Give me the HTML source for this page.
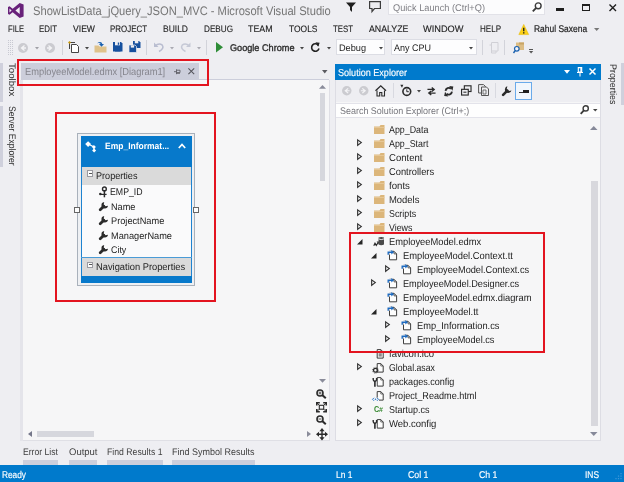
<!DOCTYPE html>
<html>
<head>
<meta charset="utf-8">
<title>ShowListData_jQuery_JSON_MVC - Microsoft Visual Studio</title>
<style>
html,body{margin:0;padding:0;}
body{width:624px;height:482px;overflow:hidden;background:#eeeef2;font-family:"Liberation Sans","DejaVu Sans",sans-serif;font-size:10px;color:#1e1e1e;position:relative;text-rendering:geometricPrecision;}
.a{position:absolute;white-space:nowrap;}
.t{position:absolute;white-space:nowrap;line-height:12px;transform-origin:0 0;}
.vt{position:absolute;white-space:nowrap;line-height:12px;transform-origin:0 0;}
svg{overflow:visible;}
#root{position:absolute;left:0;top:0;width:624px;height:482px;will-change:transform;}
</style>
</head>
<body>
<div id="root">
<svg class="a" style="left:7.700px;top:2.900px" width="15.600" height="15" viewBox="0 0 16 15" preserveAspectRatio="none"><path d="M12 0 L16 1.600 V13.400 L12 15 L4.800 9.200 L1.600 11.700 L0 10.900 V4.100 L1.600 3.300 L4.800 5.800 Z M12 4 L7.600 7.500 L12 11 Z M1.500 5.600 V9.400 L3.700 7.500 Z" fill="#68217a" fill-rule="evenodd"/></svg>
<div class="t" style="left:33px;top:5px;font-size:12.4px;color:#757575;transform:scaleX(0.8996);">ShowListData_jQuery_JSON_MVC - Microsoft Visual Studio</div>
<svg class="a" style="left:346px;top:2px" width="10" height="10" viewBox="0 0 10 10"><path d="M0 0.500 H10 L6 5 V10 L4 8 V5 Z" fill="#1e1e1e"/></svg>
<svg class="a" style="left:369px;top:1px" width="12" height="11.5" viewBox="0 0 12 11.5"><path d="M0.600 0.600 H11.400 V7.500 H5.500 L3 10.500 V7.500 H0.600 Z" fill="none" stroke="#3d3d3d" stroke-width="1.200"/></svg>
<div class="a" style="left:388px;top:0px;width:156.5px;height:15px;background:#fcfcfd;border-bottom:1px solid #e2e2e8;border-left:1px solid #e2e2e8;border-right:1px solid #e2e2e8;box-sizing:border-box;"></div>
<div class="t" style="left:393px;top:3px;font-size:9.8px;color:#808086;transform:scaleX(0.9411);">Quick Launch (Ctrl+Q)</div>
<svg class="a" style="left:532px;top:2px" width="10" height="10" viewBox="0 0 10 10"><circle cx="6.200" cy="3.800" r="2.900" fill="none" stroke="#3a3a3a" stroke-width="1.400"/><path d="M4.200 5.800 L0.800 9.400" stroke="#3a3a3a" stroke-width="1.800"/></svg>
<div class="a" style="left:556px;top:8.2px;width:7.5px;height:2.6px;background:#1e1e1e;"></div>
<div class="a" style="left:582px;top:4px;width:7.5px;height:7px;background:transparent;border:1px solid #1e1e1e;border-top-width:2.500px;box-sizing:border-box;"></div>
<svg class="a" style="left:608.5px;top:4px" width="7.5" height="7.5" viewBox="0 0 7.5 7.5"><path d="M0.500 0.500 L7 7 M7 0.500 L0.500 7" stroke="#1e1e1e" stroke-width="1.400"/></svg>
<div class="t" style="left:8px;top:23px;font-size:9.3px;color:#1e1e1e;transform:scaleX(0.8147);-webkit-text-stroke:0.12px #1e1e1e;">FILE</div>
<div class="t" style="left:39px;top:23px;font-size:9.3px;color:#1e1e1e;transform:scaleX(0.8497);-webkit-text-stroke:0.12px #1e1e1e;">EDIT</div>
<div class="t" style="left:73px;top:23px;font-size:9.3px;color:#1e1e1e;transform:scaleX(0.9256);-webkit-text-stroke:0.12px #1e1e1e;">VIEW</div>
<div class="t" style="left:110px;top:23px;font-size:9.3px;color:#1e1e1e;transform:scaleX(0.8525);-webkit-text-stroke:0.12px #1e1e1e;">PROJECT</div>
<div class="t" style="left:163px;top:23px;font-size:9.3px;color:#1e1e1e;transform:scaleX(0.9127);-webkit-text-stroke:0.12px #1e1e1e;">BUILD</div>
<div class="t" style="left:204px;top:23px;font-size:9.3px;color:#1e1e1e;transform:scaleX(0.8768);-webkit-text-stroke:0.12px #1e1e1e;">DEBUG</div>
<div class="t" style="left:248px;top:23px;font-size:9.3px;color:#1e1e1e;transform:scaleX(0.9484);-webkit-text-stroke:0.12px #1e1e1e;">TEAM</div>
<div class="t" style="left:288.5px;top:23px;font-size:9.3px;color:#1e1e1e;transform:scaleX(0.9090);-webkit-text-stroke:0.12px #1e1e1e;">TOOLS</div>
<div class="t" style="left:333px;top:23px;font-size:9.3px;color:#1e1e1e;transform:scaleX(0.8415);-webkit-text-stroke:0.12px #1e1e1e;">TEST</div>
<div class="t" style="left:368.5px;top:23px;font-size:9.3px;color:#1e1e1e;transform:scaleX(0.9474);-webkit-text-stroke:0.12px #1e1e1e;">ANALYZE</div>
<div class="t" style="left:423px;top:23px;font-size:9.3px;color:#1e1e1e;transform:scaleX(0.9925);-webkit-text-stroke:0.12px #1e1e1e;">WINDOW</div>
<div class="t" style="left:479.5px;top:23px;font-size:9.3px;color:#1e1e1e;transform:scaleX(0.8644);-webkit-text-stroke:0.12px #1e1e1e;">HELP</div>
<svg class="a" style="left:518px;top:24px" width="11.5" height="11" viewBox="0 0 10 10.5"><path d="M5 0.400 L9.700 10.100 H0.300 Z" fill="#fcd116" stroke="#e6b800" stroke-width="0.500"/><path d="M5 3.500 V7" stroke="#1e1e1e" stroke-width="1.300"/><rect x="4.350" y="7.800" width="1.300" height="1.300" fill="#1e1e1e"/></svg>
<div class="t" style="left:534.3px;top:24px;font-size:9.8px;color:#1e1e1e;transform:scaleX(0.8625);-webkit-text-stroke:0.2px #1e1e1e;">Rahul Saxena</div>
<svg class="a" style="left:593.8px;top:27.7px" width="5.4" height="3.1" viewBox="0 0 5.4 3.1"><path d="M0 0 H5.4 L2.7 3.1 Z" fill="#777"/></svg>
<div class="a" style="left:8px;top:39.500px;width:5px;height:15px;background:repeating-linear-gradient(0deg,#c8c9d2 0 1px,transparent 1px 2px);"></div>
<div class="a" style="left:9px;top:39.500px;width:1px;height:15px;background:#eeeef2;"></div><div class="a" style="left:11px;top:39.500px;width:1px;height:15px;background:#eeeef2;"></div>
<svg class="a" style="left:18px;top:42.5px" width="10" height="10" viewBox="0 0 10 10"><circle cx="5" cy="5" r="5" fill="#cbcbd0"/><path d="M6.500 2.500 L3.500 5 L6.500 7.500 M3.500 5 H8" fill="none" stroke="#f4f4f6" stroke-width="1.300"/></svg>
<svg class="a" style="left:35.0px;top:47.3px" width="4" height="2.5" viewBox="0 0 4 2.5"><path d="M0 0 H4 L2.0 2.5 Z" fill="#a0a0a6"/></svg>
<svg class="a" style="left:45px;top:42.5px" width="10" height="10" viewBox="0 0 10 10"><circle cx="5" cy="5" r="5" fill="#cbcbd0"/><path d="M3.500 2.500 L6.500 5 L3.500 7.500 M6.500 5 H2" fill="none" stroke="#f4f4f6" stroke-width="1.300"/></svg>
<div class="a" style="left:62px;top:40px;width:1px;height:15px;background:#d2d3da;"></div>
<svg class="a" style="left:67.5px;top:41px" width="12.5" height="12" viewBox="0 0 12.5 12"><path d="M3.500 3.500 H8.500 L10.500 5.500 V11.500 H3.500 Z" fill="#fff" stroke="#444" stroke-width="1"/><path d="M1.500 8 V1.500 H7" fill="none" stroke="#444" stroke-width="1"/><path d="M0 1.500 L1.500 0 L3 1.500 L1.500 3 Z" fill="#c89a10"/></svg>
<svg class="a" style="left:84.5px;top:47.3px" width="4" height="2.5" viewBox="0 0 4 2.5"><path d="M0 0 H4 L2.0 2.5 Z" fill="#444"/></svg>
<svg class="a" style="left:94px;top:41px" width="13.5" height="12" viewBox="0 0 13.5 12"><path d="M0.500 4.500 H4.500 L5.500 5.500 H12.500 V11.500 H0.500 Z" fill="#dfc28b"/><path d="M3 2.200 Q7.500 -0.500 8.300 3 L10 3 L7.500 5.800 L5 3 L6.700 3 Q6 1.500 3 2.200Z" fill="#1b62b0"/></svg>
<svg class="a" style="left:113px;top:42px" width="9.5" height="9.5" viewBox="0 0 9.5 9.5"><path d="M0 0 H8 L9.500 1.500 V9.500 H0 Z" fill="#16509e"/><rect x="2" y="0" width="5" height="3.300" fill="#eeeef2"/><rect x="4.800" y="0.500" width="1.400" height="2.300" fill="#16509e"/><rect x="2" y="5.500" width="5.500" height="4" fill="#16509e"/></svg>
<svg class="a" style="left:129px;top:41px" width="11.5" height="11.5" viewBox="0 0 11.5 11.5"><path d="M4 0 H10 L11.500 1.500 V7 H4 Z" fill="#16509e"/><rect x="5.800" y="0" width="3.500" height="2.300" fill="#eeeef2"/><path d="M0 4 H6 L7.500 5.500 V11.500 H0 Z" fill="#16509e" stroke="#eeeef2" stroke-width="0.700"/><rect x="1.800" y="4.300" width="3.300" height="2.300" fill="#eeeef2"/></svg>
<div class="a" style="left:146px;top:40px;width:1px;height:15px;background:#d2d3da;"></div>
<svg class="a" style="left:152.5px;top:42px" width="11.5" height="10" viewBox="0 0 11.5 10"><path d="M1 0.500 L1 5 L5.500 5 Z" fill="#b9bdd0"/><path d="M2 4 Q6 0.500 9.300 3.200 Q11.500 6.500 6 9.500" fill="none" stroke="#b9bdd0" stroke-width="1.500"/></svg>
<svg class="a" style="left:170.0px;top:47.3px" width="4" height="2.5" viewBox="0 0 4 2.5"><path d="M0 0 H4 L2.0 2.5 Z" fill="#aaaab2"/></svg>
<svg class="a" style="left:180px;top:42px" width="11.5" height="10" viewBox="0 0 11.5 10"><path d="M10.500 0.500 L10.500 5 L6 5 Z" fill="#c6c9d6"/><path d="M9.500 4 Q5.500 0.500 2.200 3.200 Q0 6.500 5.500 9.500" fill="none" stroke="#c6c9d6" stroke-width="1.500"/></svg>
<svg class="a" style="left:197.0px;top:47.3px" width="4" height="2.5" viewBox="0 0 4 2.5"><path d="M0 0 H4 L2.0 2.5 Z" fill="#aaaab2"/></svg>
<div class="a" style="left:206px;top:40px;width:1px;height:15px;background:#d2d3da;"></div>
<svg class="a" style="left:216px;top:42px" width="7" height="10.5" viewBox="0 0 7 10.5"><path d="M0 0 L7 5.250 L0 10.500 Z" fill="#2f8d38"/></svg>
<div class="t" style="left:229.5px;top:43px;font-size:9.6px;color:#2d2d2d;transform:scaleX(0.9519);-webkit-text-stroke:0.35px #2d2d2d;">Google Chrome</div>
<svg class="a" style="left:300.0px;top:47.3px" width="4" height="2.5" viewBox="0 0 4 2.5"><path d="M0 0 H4 L2.0 2.5 Z" fill="#444"/></svg>
<svg class="a" style="left:310.3px;top:42px" width="10.5" height="10.5" viewBox="0 0 12 12"><path d="M9.800 4 A4.300 4.300 0 1 0 10.300 7.500" fill="none" stroke="#222" stroke-width="1.800"/><path d="M6.300 0.300 L11 0.800 L9.300 5.300 Z" fill="#222"/></svg>
<svg class="a" style="left:327.0px;top:47.3px" width="4" height="2.5" viewBox="0 0 4 2.5"><path d="M0 0 H4 L2.0 2.5 Z" fill="#444"/></svg>
<div class="a" style="left:336px;top:38.8px;width:48.5px;height:16.7px;background:#fdfdfe;border:1px solid #dcdde4;box-sizing:border-box;"></div>
<div class="t" style="left:339px;top:43px;font-size:9.5px;color:#1e1e1e;transform:scaleX(0.9645);">Debug</div>
<svg class="a" style="left:379.0px;top:47.3px" width="4" height="2.5" viewBox="0 0 4 2.5"><path d="M0 0 H4 L2.0 2.5 Z" fill="#444"/></svg>
<div class="a" style="left:391px;top:38.8px;width:85.5px;height:16.7px;background:#fdfdfe;border:1px solid #dcdde4;box-sizing:border-box;"></div>
<div class="t" style="left:394px;top:43px;font-size:9.5px;color:#1e1e1e;transform:scaleX(0.9471);">Any CPU</div>
<svg class="a" style="left:469.0px;top:47.3px" width="4" height="2.5" viewBox="0 0 4 2.5"><path d="M0 0 H4 L2.0 2.5 Z" fill="#444"/></svg>
<div class="a" style="left:482px;top:40px;width:1px;height:15px;background:#d2d3da;"></div>
<svg class="a" style="left:489px;top:41.5px" width="9.5" height="11.5" viewBox="0 0 9.5 11.5"><path d="M2.500 0.500 H9 V9 H2.500 Z" fill="none" stroke="#d0d0d6" stroke-width="1"/><path d="M0.500 3 H2.500 V11 H7 V9" fill="none" stroke="#d0d0d6" stroke-width="1"/></svg>
<div class="a" style="left:504px;top:40px;width:1px;height:15px;background:#d2d3da;"></div>
<svg class="a" style="left:512.5px;top:41.5px" width="11" height="11.5" viewBox="0 0 11 11.5"><rect x="3" y="0.500" width="8" height="7.500" fill="#dcbd85"/><rect x="6" y="0.500" width="5" height="2" fill="#c9a566"/><circle cx="3.800" cy="6.800" r="2.300" fill="#f4f4f8" stroke="#1b62b0" stroke-width="1.200"/><path d="M2.300 8.500 L0.500 11" stroke="#1b62b0" stroke-width="1.400"/></svg>
<div class="a" style="left:529.3px;top:49.3px;width:4.2px;height:1px;background:#555;"></div>
<svg class="a" style="left:529.3px;top:51px" width="4.2" height="2.6" viewBox="0 0 4.2 2.6"><path d="M0 0 H4.2 L2.1 2.6 Z" fill="#555"/></svg>
<div class="vt" style="left:16.67px;top:63px;font-size:9.5px;color:#2d2d2d;transform:rotate(90deg) scaleX(1.0170);">Toolbox</div>
<div class="a" style="left:0px;top:63px;width:3px;height:38.5px;background:#cfd0dc;"></div>
<div class="vt" style="left:16.67px;top:106.3px;font-size:9.5px;color:#2d2d2d;transform:rotate(90deg) scaleX(0.9047);">Server Explorer</div>
<div class="a" style="left:0px;top:106px;width:3px;height:60.5px;background:#cfd0dc;"></div>
<div class="a" style="left:21px;top:63px;width:178px;height:16px;background:#cccedb;"></div>
<div class="a" style="left:21px;top:78.5px;width:308px;height:1.5px;background:#cccedb;"></div>
<div class="t" style="left:25.3px;top:67px;font-size:10.3px;color:#85858d;transform:scaleX(0.9038);">EmployeeModel.edmx [Diagram1]</div>
<svg class="a" style="left:174px;top:69px" width="6.5" height="5.5" viewBox="0 0 6.5 5.5"><path d="M0 2.700 H2.500 M2.500 0.300 V5.200 M2.500 1.200 H6 V3.600 H2.500 M2.500 4.300 H6" fill="none" stroke="#5f5f66" stroke-width="0.900"/></svg>
<svg class="a" style="left:188.2px;top:68.2px" width="6.6" height="6.6" viewBox="0 0 6.6 6.6"><path d="M0.400 0.400 L6.200 6.200 M6.200 0.400 L0.400 6.200" stroke="#55555c" stroke-width="1.050"/></svg>
<svg class="a" style="left:322px;top:70px" width="5.5" height="3.5" viewBox="0 0 5.5 3.5"><path d="M0 0 H5.5 L2.75 3.5 Z" fill="#5a5a60"/></svg>
<div class="a" style="left:19.5px;top:80px;width:3.5px;height:361px;background:#e4e4ea;"></div>
<div class="a" style="left:22.5px;top:80px;width:307px;height:361px;background:#f6f6f7;border:1px solid #dfdfe5;border-top:none;border-left:none;box-sizing:border-box;"></div>
<svg class="a" style="left:319px;top:84.7px" width="7" height="3.8" viewBox="0 0 7 3.8"><path d="M0 3.8 H7 L3.5 0 Z" fill="#8a8c9a"/></svg>
<div class="a" style="left:319.5px;top:93px;width:5.5px;height:87.5px;background:#d6d7dd;"></div>
<svg class="a" style="left:319px;top:379px" width="7" height="3.8" viewBox="0 0 7 3.8"><path d="M0 0 H7 L3.5 3.8 Z" fill="#8a8c9a"/></svg>
<svg class="a" style="left:28px;top:431px" width="4" height="6" viewBox="0 0 4 6"><path d="M4 0 V6 L0 3 Z" fill="#75778a"/></svg>
<div class="a" style="left:37px;top:431px;width:57px;height:6px;background:#d6d7dd;"></div>
<svg class="a" style="left:307px;top:431px" width="4" height="6" viewBox="0 0 4 6"><path d="M0 0 V6 L4 3 Z" fill="#8a8c9a"/></svg>
<svg class="a" style="left:316px;top:389px" width="10.5" height="10" viewBox="0 0 10.5 10"><circle cx="4" cy="4" r="3" fill="none" stroke="#2b2b2b" stroke-width="1.600"/><path d="M6.200 6 L9.800 9.300" stroke="#2b2b2b" stroke-width="2"/><path d="M2.500 4 H5.500 M4 2.500 V5.500" stroke="#2b2b2b" stroke-width="0.800"/></svg>
<svg class="a" style="left:316px;top:402px" width="11" height="10.5" viewBox="0 0 11 10.5"><path d="M0.800 3.500 V0.800 H3.800 M7.200 0.800 H10.200 V3.500 M0.800 7 V9.700 H3.800 M7.200 9.700 H10.200 V7" stroke="#2b2b2b" stroke-width="1.600" fill="none"/><rect x="3.300" y="3.300" width="4.400" height="3.900" fill="none" stroke="#2b2b2b" stroke-width="1.100"/><path d="M1 1 L3.500 3.500 M10 1 L7.500 3.500 M1 9.500 L3.500 7 M10 9.500 L7.500 7" stroke="#2b2b2b" stroke-width="0.900"/></svg>
<svg class="a" style="left:316px;top:415px" width="10.5" height="10" viewBox="0 0 10.5 10"><circle cx="4" cy="4" r="3" fill="none" stroke="#2b2b2b" stroke-width="1.600"/><path d="M6.200 6 L9.800 9.300" stroke="#2b2b2b" stroke-width="2"/><path d="M2.500 4 H5.500" stroke="#2b2b2b" stroke-width="0.800"/></svg>
<svg class="a" style="left:315.5px;top:427.5px" width="12" height="12.5" viewBox="0 0 12 12.5"><path d="M6 1.500 V11 M1.500 6.250 H10.500" stroke="#2b2b2b" stroke-width="1.400"/><path d="M6 0 L3.400 3.200 H8.600 Z M6 12.500 L3.400 9.300 H8.600 Z M0 6.250 L3 3.700 V8.800 Z M12 6.250 L9 3.700 V8.800 Z" fill="#2b2b2b"/></svg>
<div class="a" style="left:77px;top:132.5px;width:117.8px;height:153.5px;background:#eef0f3;border:1px solid #a9b1bb;box-sizing:border-box;"></div>
<div class="a" style="left:81px;top:136px;width:111.3px;height:146.6px;background:#fafafb;border-left:1.500px solid #1f83d0;border-right:1.500px solid #1f83d0;box-sizing:border-box;"></div>
<div class="a" style="left:81px;top:136px;width:111.3px;height:30.5px;background:#0779cb;"></div>
<div class="a" style="left:82px;top:167px;width:109.3px;height:17.8px;background:#dadada;"></div>
<div class="a" style="left:81px;top:257px;width:111.3px;height:1px;background:#4a9bd6;"></div>
<div class="a" style="left:82px;top:258px;width:109.3px;height:17.5px;background:#dadada;"></div>
<div class="a" style="left:81px;top:276px;width:111.3px;height:6.6px;background:#0779cb;"></div>
<svg class="a" style="left:84.5px;top:140.5px" width="12" height="11.5" viewBox="0 0 12 11.5"><path d="M3.100 0.200 L6 3.100 L3.100 6 L0.200 3.100 Z" fill="#fff"/><path d="M8.900 3.900 L10.900 5.900 L8.900 7.900 L6.900 5.900 Z" fill="#fff"/><path d="M9.100 7.400 L11.100 9.400 L9.100 11.400 L7.100 9.400 Z" fill="#fff"/><path d="M3.100 3.100 L8.900 5.900 L9.100 9.400" stroke="#fff" stroke-width="1.100" fill="none"/></svg>
<div class="t" style="left:104.7px;top:140px;font-size:9.2px;color:#fff;font-weight:bold;transform:scaleX(0.9249);">Emp_Informat...</div>
<svg class="a" style="left:177.5px;top:142.8px" width="8" height="5.5" viewBox="0 0 8 5.5"><path d="M0.800 5 L4 1.500 L7.200 5" fill="none" stroke="#fff" stroke-width="1.700"/></svg>
<div class="a" style="left:86.8px;top:170.2px;width:6.5px;height:6.5px;background:#fdfdfd;border:1px solid #9a9aa0;box-sizing:border-box;"></div>
<div class="a" style="left:88.6px;top:173.0px;width:3px;height:1px;background:#555;"></div>
<div class="t" style="left:96.2px;top:171px;font-size:9.8px;color:#222;transform:scaleX(0.9292);">Properties</div>
<svg class="a" style="left:99px;top:186px" width="9" height="12" viewBox="0 0 9 12"><circle cx="5.400" cy="2.900" r="1.900" fill="none" stroke="#2b2b2b" stroke-width="1.400"/><path d="M5.400 4.800 V11.300" stroke="#2b2b2b" stroke-width="1.500"/><path d="M1 8.400 H7.600" stroke="#2b2b2b" stroke-width="1.200"/><circle cx="1.300" cy="7.900" r="1.250" fill="#2b2b2b"/></svg>
<div class="t" style="left:110.4px;top:187px;font-size:9.8px;color:#222;transform:scaleX(0.8935);">EMP_ID</div>
<svg class="a" style="left:99px;top:202.0px" width="8.5" height="9" viewBox="0 0 8.5 9"><path d="M1.200 7.800 L4.800 4.200" stroke="#2b2b2b" stroke-width="2.800" stroke-linecap="round"/><path d="M5.200 0 A3.300 3.300 0 1 0 9 3.800 L6.500 4.300 L4.700 2.500 Z" fill="#2b2b2b"/></svg>
<div class="t" style="left:111px;top:202px;font-size:9.6px;color:#222;transform:scaleX(0.9529);">Name</div>
<svg class="a" style="left:99px;top:216.0px" width="8.5" height="9" viewBox="0 0 8.5 9"><path d="M1.200 7.800 L4.800 4.200" stroke="#2b2b2b" stroke-width="2.800" stroke-linecap="round"/><path d="M5.200 0 A3.300 3.300 0 1 0 9 3.800 L6.500 4.300 L4.700 2.500 Z" fill="#2b2b2b"/></svg>
<div class="t" style="left:111px;top:216px;font-size:9.6px;color:#222;transform:scaleX(0.9606);">ProjectName</div>
<svg class="a" style="left:99px;top:231.0px" width="8.5" height="9" viewBox="0 0 8.5 9"><path d="M1.200 7.800 L4.800 4.200" stroke="#2b2b2b" stroke-width="2.800" stroke-linecap="round"/><path d="M5.200 0 A3.300 3.300 0 1 0 9 3.800 L6.500 4.300 L4.700 2.500 Z" fill="#2b2b2b"/></svg>
<div class="t" style="left:111px;top:231px;font-size:9.6px;color:#222;transform:scaleX(0.9608);">ManagerName</div>
<svg class="a" style="left:99px;top:245.0px" width="8.5" height="9" viewBox="0 0 8.5 9"><path d="M1.200 7.800 L4.800 4.200" stroke="#2b2b2b" stroke-width="2.800" stroke-linecap="round"/><path d="M5.200 0 A3.300 3.300 0 1 0 9 3.800 L6.500 4.300 L4.700 2.500 Z" fill="#2b2b2b"/></svg>
<div class="t" style="left:111px;top:245px;font-size:9.6px;color:#222;transform:scaleX(0.9254);">City</div>
<div class="a" style="left:86.8px;top:261.6px;width:6.5px;height:6.5px;background:#fdfdfd;border:1px solid #9a9aa0;box-sizing:border-box;"></div>
<div class="a" style="left:88.6px;top:264.40000000000003px;width:3px;height:1px;background:#555;"></div>
<div class="t" style="left:96.3px;top:262px;font-size:9.8px;color:#222;transform:scaleX(0.9521);">Navigation Properties</div>
<div class="a" style="left:74px;top:207px;width:6px;height:6px;background:#fdfdfd;border:1px solid #666;box-sizing:border-box;"></div>
<div class="a" style="left:192.5px;top:207px;width:6px;height:6px;background:#fdfdfd;border:1px solid #666;box-sizing:border-box;"></div>
<div class="t" style="left:23px;top:447px;font-size:9.6px;color:#3f3f3f;transform:scaleX(0.8989);">Error List</div>
<div class="a" style="left:23px;top:460.4px;width:35px;height:4.6px;background:#cdcfdc;"></div>
<div class="t" style="left:68.5px;top:447px;font-size:9.6px;color:#3f3f3f;transform:scaleX(0.9890);">Output</div>
<div class="a" style="left:68.5px;top:460.4px;width:28.5px;height:4.6px;background:#cdcfdc;"></div>
<div class="t" style="left:107px;top:447px;font-size:9.6px;color:#3f3f3f;transform:scaleX(0.9046);">Find Results 1</div>
<div class="a" style="left:107px;top:460.4px;width:55.5px;height:4.6px;background:#cdcfdc;"></div>
<div class="t" style="left:172px;top:447px;font-size:9.6px;color:#3f3f3f;transform:scaleX(0.9372);">Find Symbol Results</div>
<div class="a" style="left:172px;top:460.4px;width:82.5px;height:4.6px;background:#cdcfdc;"></div>
<div class="a" style="left:0px;top:464.9px;width:624px;height:17.1px;background:#007acc;"></div>
<div class="t" style="left:2px;top:470px;font-size:9.8px;color:#fff;transform:scaleX(0.8473);-webkit-text-stroke:0.15px #fff;">Ready</div>
<div class="t" style="left:335.8px;top:470px;font-size:9.8px;color:#fff;transform:scaleX(0.8599);-webkit-text-stroke:0.15px #fff;">Ln 1</div>
<div class="t" style="left:407.5px;top:470px;font-size:9.8px;color:#fff;transform:scaleX(0.8961);-webkit-text-stroke:0.15px #fff;">Col 1</div>
<div class="t" style="left:479px;top:470px;font-size:9.8px;color:#fff;transform:scaleX(0.8937);-webkit-text-stroke:0.15px #fff;">Ch 1</div>
<div class="t" style="left:585px;top:470px;font-size:9.8px;color:#fff;transform:scaleX(0.8570);-webkit-text-stroke:0.15px #fff;">INS</div>
<svg class="a" style="left:614px;top:472.5px" width="8" height="8" viewBox="0 0 8 8"><path d="M7 0 V1.200 M7 2.500 V3.700 M7 5 V6.200 M4.500 2.500 V3.700 M4.500 5 V6.200 M2 5 V6.200" stroke="#3f97d8" stroke-width="1.200"/></svg>
<div class="a" style="left:335px;top:63.8px;width:266px;height:377.2px;background:#f6f6f7;border:1px solid #dddde4;box-sizing:border-box;"></div>
<div class="a" style="left:335px;top:63.8px;width:266px;height:16px;background:#007acc;"></div>
<div class="t" style="left:338px;top:68px;font-size:10px;color:#fff;transform:scaleX(0.9061);-webkit-text-stroke:0.15px #fff;">Solution Explorer</div>
<svg class="a" style="left:564px;top:70px" width="6" height="3.8" viewBox="0 0 6 3.8"><path d="M0 0 H6 L3.0 3.8 Z" fill="#fff"/></svg>
<svg class="a" style="left:576.5px;top:67px" width="6" height="9.5" viewBox="0 0 6 9.5"><path d="M1.300 0.600 H4.700 V5 H1.300 Z M0 5.500 H6 M3 5.500 V9.500" fill="none" stroke="#fff" stroke-width="1.100"/><path d="M4 0.600 V5" stroke="#fff" stroke-width="1.300"/></svg>
<svg class="a" style="left:588.5px;top:68px" width="7" height="7" viewBox="0 0 7 7"><path d="M0.500 0.500 L6.500 6.500 M6.500 0.500 L0.500 6.500" stroke="#fff" stroke-width="1.500"/></svg>
<div class="a" style="left:336px;top:79.8px;width:264px;height:22.7px;background:#eeeef2;"></div>
<svg class="a" style="left:342.4px;top:86px" width="9.5" height="9.5" viewBox="0 0 10 10"><circle cx="5" cy="5" r="5" fill="#cbcbd0"/><path d="M6.500 2.500 L3.500 5 L6.500 7.500 M3.500 5 H8" fill="none" stroke="#f4f4f6" stroke-width="1.300"/></svg>
<svg class="a" style="left:359.2px;top:86px" width="9.5" height="9.5" viewBox="0 0 10 10"><circle cx="5" cy="5" r="5" fill="#cbcbd0"/><path d="M3.500 2.500 L6.500 5 L3.500 7.500 M6.500 5 H2" fill="none" stroke="#f4f4f6" stroke-width="1.300"/></svg>
<svg class="a" style="left:375px;top:84.5px" width="11.5" height="11.5" viewBox="0 0 11.5 11.5"><path d="M0.500 5.800 L5.750 0.800 L11 5.800" fill="none" stroke="#2b2b2b" stroke-width="1.300"/><path d="M2 5.500 V11 H4.700 V7.500 H6.800 V11 H9.500 V5.500" fill="none" stroke="#2b2b2b" stroke-width="1.100"/></svg>
<div class="a" style="left:393px;top:83px;width:1px;height:15px;background:#d8d9e0;"></div>
<svg class="a" style="left:399.5px;top:83.5px" width="12" height="12.5" viewBox="0 0 12 12.5"><circle cx="6.800" cy="7.500" r="3.900" fill="none" stroke="#2b2b2b" stroke-width="1.600"/><path d="M6.800 5.300 V7.700 H8.800" fill="none" stroke="#2b2b2b" stroke-width="1"/><path d="M0.300 0.800 L3.300 0.800 L2 3.800 Z" fill="#2b2b2b"/></svg>
<svg class="a" style="left:416.5px;top:89.8px" width="4" height="2.5" viewBox="0 0 4 2.5"><path d="M0 0 H4 L2.0 2.5 Z" fill="#444"/></svg>
<svg class="a" style="left:427.3px;top:86.8px" width="9" height="8.5" viewBox="0 0 10 10.5"><path d="M0 3 H7.500 M5.300 0.500 L8.300 3 L5.300 5.500 M10 7.500 H2.500 M4.700 5 L1.700 7.500 L4.700 10" fill="none" stroke="#2b2b2b" stroke-width="1.700"/></svg>
<svg class="a" style="left:444px;top:86px" width="9.5" height="10.5" viewBox="0 0 11 12"><path d="M1.800 5.500 A3.800 3.800 0 0 1 8 3 M9.200 6.500 A3.800 3.800 0 0 1 3 9" fill="none" stroke="#2b2b2b" stroke-width="2.200"/><path d="M6 0 L10.800 0.500 L9.800 5.500 Z M5 12 L0.200 11.500 L1.200 6.500 Z" fill="#2b2b2b"/></svg>
<svg class="a" style="left:461px;top:84.5px" width="10.5" height="11.5" viewBox="0 0 11 12"><rect x="3.500" y="0.800" width="7" height="6" fill="#eeeef2" stroke="#2b2b2b" stroke-width="1.200"/><rect x="0.600" y="4.500" width="7" height="6" fill="#eeeef2" stroke="#2b2b2b" stroke-width="1.200"/><path d="M2.500 7.500 H5.700" stroke="#2b2b2b" stroke-width="1.100"/></svg>
<svg class="a" style="left:477.5px;top:84px" width="12" height="12" viewBox="0 0 12 12"><path d="M0.600 0.600 H5.500 L7.500 2.500 V9 H0.600 Z" fill="#eeeef2" stroke="#555" stroke-width="1"/><path d="M3.500 3 H8.500 L10.500 5 V11.500 H3.500 Z" fill="#eeeef2" stroke="#555" stroke-width="1"/><path d="M5 6 H8 V10 H5 Z" fill="none" stroke="#555" stroke-width="0.800"/></svg>
<div class="a" style="left:495px;top:83px;width:1px;height:15px;background:#d8d9e0;"></div>
<svg class="a" style="left:501.5px;top:85.5px" width="10" height="10" viewBox="0 0 9 9"><path d="M1 8 L4.800 4.200" stroke="#2b2b2b" stroke-width="2.400" stroke-linecap="round"/><path d="M4.800 0.300 A3 3 0 1 0 8.500 4 L6.300 4.600 L4.300 2.600 Z" fill="#2b2b2b"/></svg>
<div class="a" style="left:515px;top:82px;width:17px;height:18px;background:#f1f6fc;border:1px solid #6aaaea;box-sizing:border-box;"></div>
<div class="a" style="left:518.5px;top:91.5px;width:5px;height:1px;background:#333;"></div>
<div class="a" style="left:523px;top:89.5px;width:6px;height:3px;background:#1e1e1e;"></div>
<div class="a" style="left:336px;top:102.5px;width:264px;height:15.5px;background:#fefefe;border-top:1px solid #e3e3ea;border-bottom:1px solid #e3e3ea;box-sizing:border-box;"></div>
<div class="t" style="left:339.5px;top:106px;font-size:9.6px;color:#76767c;transform:scaleX(0.9332);">Search Solution Explorer (Ctrl+;)</div>
<svg class="a" style="left:580px;top:105px" width="9" height="9.5" viewBox="0 0 9 9.5"><circle cx="5.700" cy="3.400" r="2.600" fill="none" stroke="#3a3a3a" stroke-width="1.400"/><path d="M3.900 5.300 L0.700 8.900" stroke="#3a3a3a" stroke-width="1.800"/></svg>
<svg class="a" style="left:593px;top:109px" width="4.5" height="2.5" viewBox="0 0 4.5 2.5"><path d="M0 0 H4.5 L2.25 2.5 Z" fill="#444"/></svg>
<svg class="a" style="left:590px;top:126px" width="7.5" height="4" viewBox="0 0 7.5 4"><path d="M0 4 H7.5 L3.75 0 Z" fill="#868999"/></svg>
<div class="a" style="left:591px;top:180.5px;width:6.8px;height:245.5px;background:#d8d8dd;"></div>
<svg class="a" style="left:590px;top:432px" width="7.5" height="4" viewBox="0 0 7.5 4"><path d="M0 0 H7.5 L3.75 4 Z" fill="#868999"/></svg>
<svg class="a" style="left:373.5px;top:124.5px" width="10.5" height="9" viewBox="0 0 10.5 9"><path d="M0 1.500 H5.500 L6.500 0 H10.500 V9 H0 Z" fill="#dcb67a"/><path d="M0 2.500 H10.500" stroke="#e8cc9c" stroke-width="0.800"/></svg>
<div class="t" style="left:388.6px;top:125px;font-size:10px;color:#222;transform:scaleX(0.8859);">App_Data</div>
<svg class="a" style="left:356.9px;top:139.1px" width="5.2" height="7.2" viewBox="0 0 5.2 7.2"><path d="M0.650 0.900 L4.300 3.600 L0.650 6.300 Z" fill="#f6f6f7" stroke="#333" stroke-width="1.150"/></svg>
<svg class="a" style="left:373.5px;top:138.5px" width="10.5" height="9" viewBox="0 0 10.5 9"><path d="M0 1.500 H5.500 L6.500 0 H10.500 V9 H0 Z" fill="#dcb67a"/><path d="M0 2.500 H10.500" stroke="#e8cc9c" stroke-width="0.800"/></svg>
<div class="t" style="left:388.6px;top:139px;font-size:10px;color:#222;transform:scaleX(0.8860);">App_Start</div>
<svg class="a" style="left:356.9px;top:153.1px" width="5.2" height="7.2" viewBox="0 0 5.2 7.2"><path d="M0.650 0.900 L4.300 3.600 L0.650 6.300 Z" fill="#f6f6f7" stroke="#333" stroke-width="1.150"/></svg>
<svg class="a" style="left:373.5px;top:152.5px" width="10.5" height="9" viewBox="0 0 10.5 9"><path d="M0 1.500 H5.500 L6.500 0 H10.500 V9 H0 Z" fill="#dcb67a"/><path d="M0 2.500 H10.500" stroke="#e8cc9c" stroke-width="0.800"/></svg>
<div class="t" style="left:388.6px;top:153px;font-size:10px;color:#222;transform:scaleX(0.9537);">Content</div>
<svg class="a" style="left:356.9px;top:167.1px" width="5.2" height="7.2" viewBox="0 0 5.2 7.2"><path d="M0.650 0.900 L4.300 3.600 L0.650 6.300 Z" fill="#f6f6f7" stroke="#333" stroke-width="1.150"/></svg>
<svg class="a" style="left:373.5px;top:166.5px" width="10.5" height="9" viewBox="0 0 10.5 9"><path d="M0 1.500 H5.500 L6.500 0 H10.500 V9 H0 Z" fill="#dcb67a"/><path d="M0 2.500 H10.500" stroke="#e8cc9c" stroke-width="0.800"/></svg>
<div class="t" style="left:388.6px;top:167px;font-size:10px;color:#222;transform:scaleX(0.9328);">Controllers</div>
<svg class="a" style="left:356.9px;top:181.1px" width="5.2" height="7.2" viewBox="0 0 5.2 7.2"><path d="M0.650 0.900 L4.300 3.600 L0.650 6.300 Z" fill="#f6f6f7" stroke="#333" stroke-width="1.150"/></svg>
<svg class="a" style="left:373.5px;top:180.5px" width="10.5" height="9" viewBox="0 0 10.5 9"><path d="M0 1.500 H5.500 L6.500 0 H10.500 V9 H0 Z" fill="#dcb67a"/><path d="M0 2.500 H10.500" stroke="#e8cc9c" stroke-width="0.800"/></svg>
<div class="t" style="left:388.6px;top:181px;font-size:10px;color:#222;transform:scaleX(0.9641);">fonts</div>
<svg class="a" style="left:356.9px;top:195.4px" width="5.2" height="7.2" viewBox="0 0 5.2 7.2"><path d="M0.650 0.900 L4.300 3.600 L0.650 6.300 Z" fill="#f6f6f7" stroke="#333" stroke-width="1.150"/></svg>
<svg class="a" style="left:373.5px;top:194.8px" width="10.5" height="9" viewBox="0 0 10.5 9"><path d="M0 1.500 H5.500 L6.500 0 H10.500 V9 H0 Z" fill="#dcb67a"/><path d="M0 2.500 H10.500" stroke="#e8cc9c" stroke-width="0.800"/></svg>
<div class="t" style="left:388.6px;top:195px;font-size:10px;color:#222;transform:scaleX(0.9431);">Models</div>
<svg class="a" style="left:356.9px;top:209.4px" width="5.2" height="7.2" viewBox="0 0 5.2 7.2"><path d="M0.650 0.900 L4.300 3.600 L0.650 6.300 Z" fill="#f6f6f7" stroke="#333" stroke-width="1.150"/></svg>
<svg class="a" style="left:373.5px;top:208.8px" width="10.5" height="9" viewBox="0 0 10.5 9"><path d="M0 1.500 H5.500 L6.500 0 H10.500 V9 H0 Z" fill="#dcb67a"/><path d="M0 2.500 H10.500" stroke="#e8cc9c" stroke-width="0.800"/></svg>
<div class="t" style="left:388.6px;top:209px;font-size:10px;color:#222;transform:scaleX(0.8868);">Scripts</div>
<svg class="a" style="left:356.9px;top:223.4px" width="5.2" height="7.2" viewBox="0 0 5.2 7.2"><path d="M0.650 0.900 L4.300 3.600 L0.650 6.300 Z" fill="#f6f6f7" stroke="#333" stroke-width="1.150"/></svg>
<svg class="a" style="left:373.5px;top:222.8px" width="10.5" height="9" viewBox="0 0 10.5 9"><path d="M0 1.500 H5.500 L6.500 0 H10.500 V9 H0 Z" fill="#dcb67a"/><path d="M0 2.500 H10.500" stroke="#e8cc9c" stroke-width="0.800"/></svg>
<div class="t" style="left:388.6px;top:223px;font-size:10px;color:#222;transform:scaleX(0.8832);">Views</div>
<svg class="a" style="left:357.0px;top:238.8px" width="5.5" height="5.5" viewBox="0 0 5.5 5.5"><path d="M5.500 0 V5.500 H0 Z" fill="#262626"/></svg>
<svg class="a" style="left:373px;top:235.8px" width="12" height="11.5" viewBox="0 0 12 11.5"><path d="M5.500 1.600 Q8.200 0.200 11 1.600 V8.400 Q8.200 9.900 5.500 8.400 Z" fill="#484848"/><path d="M5.500 2.900 Q8.200 4.300 11 2.900" stroke="#f5f5f7" stroke-width="0.900" fill="none"/><path d="M0.800 9.700 L2 7.300 L3.300 9.300 L5.200 6.500" stroke="#2b2b2b" stroke-width="1.200" fill="none"/><path d="M3.600 5.600 L5.800 5.600 L5.600 7.900 Z" fill="#2b2b2b"/></svg>
<div class="t" style="left:388.6px;top:237px;font-size:10px;color:#222;transform:scaleX(0.9320);">EmployeeModel.edmx</div>
<svg class="a" style="left:371.0px;top:252.8px" width="5.5" height="5.5" viewBox="0 0 5.5 5.5"><path d="M5.500 0 V5.500 H0 Z" fill="#262626"/></svg>
<svg class="a" style="left:386.5px;top:249.8px" width="11" height="11" viewBox="0 0 11 11"><path d="M2.500 1.300 H7 L9.600 3.900 V9.800 H2.500 Z" fill="#fdfdfd" stroke="#3f3f3f" stroke-width="1"/><path d="M7 1.300 V3.900 H9.600" fill="none" stroke="#3f3f3f" stroke-width="0.800"/><path d="M1.200 5 V2.300 H5" fill="none" stroke="#f6f6f7" stroke-width="2.600"/><path d="M1.200 4.800 V2.300 H5" fill="none" stroke="#1e6bc0" stroke-width="1.400"/><path d="M4.300 0.100 L7 2.300 L4.300 4.500 Z" fill="#1e6bc0"/></svg>
<div class="t" style="left:402.6px;top:251px;font-size:10px;color:#222;transform:scaleX(0.9371);">EmployeeModel.Context.tt</div>
<svg class="a" style="left:384.9px;top:265.40000000000003px" width="5.2" height="7.2" viewBox="0 0 5.2 7.2"><path d="M0.650 0.900 L4.300 3.600 L0.650 6.300 Z" fill="#f6f6f7" stroke="#333" stroke-width="1.150"/></svg>
<svg class="a" style="left:400.5px;top:263.8px" width="11" height="11" viewBox="0 0 11 11"><path d="M2.500 1.300 H7 L9.600 3.900 V9.800 H2.500 Z" fill="#fdfdfd" stroke="#3f3f3f" stroke-width="1"/><path d="M7 1.300 V3.900 H9.600" fill="none" stroke="#3f3f3f" stroke-width="0.800"/><path d="M1.200 5 V2.300 H5" fill="none" stroke="#f6f6f7" stroke-width="2.600"/><path d="M1.200 4.800 V2.300 H5" fill="none" stroke="#1e6bc0" stroke-width="1.400"/><path d="M4.300 0.100 L7 2.300 L4.300 4.500 Z" fill="#1e6bc0"/></svg>
<div class="t" style="left:416.6px;top:265px;font-size:10px;color:#222;transform:scaleX(0.9210);">EmployeeModel.Context.cs</div>
<svg class="a" style="left:370.9px;top:279.40000000000003px" width="5.2" height="7.2" viewBox="0 0 5.2 7.2"><path d="M0.650 0.900 L4.300 3.600 L0.650 6.300 Z" fill="#f6f6f7" stroke="#333" stroke-width="1.150"/></svg>
<svg class="a" style="left:386.5px;top:277.8px" width="11" height="11" viewBox="0 0 11 11"><path d="M2.500 1.300 H7 L9.600 3.900 V9.800 H2.500 Z" fill="#fdfdfd" stroke="#3f3f3f" stroke-width="1"/><path d="M7 1.300 V3.900 H9.600" fill="none" stroke="#3f3f3f" stroke-width="0.800"/><path d="M1.200 5 V2.300 H5" fill="none" stroke="#f6f6f7" stroke-width="2.600"/><path d="M1.200 4.800 V2.300 H5" fill="none" stroke="#1e6bc0" stroke-width="1.400"/><path d="M4.300 0.100 L7 2.300 L4.300 4.500 Z" fill="#1e6bc0"/></svg>
<div class="t" style="left:402.6px;top:279px;font-size:10px;color:#222;transform:scaleX(0.9162);">EmployeeModel.Designer.cs</div>
<svg class="a" style="left:386.5px;top:291.7px" width="11" height="11" viewBox="0 0 11 11"><path d="M2.500 1.300 H7 L9.600 3.900 V9.800 H2.500 Z" fill="#fdfdfd" stroke="#3f3f3f" stroke-width="1"/><path d="M7 1.300 V3.900 H9.600" fill="none" stroke="#3f3f3f" stroke-width="0.800"/><path d="M1.200 5 V2.300 H5" fill="none" stroke="#f6f6f7" stroke-width="2.600"/><path d="M1.200 4.800 V2.300 H5" fill="none" stroke="#1e6bc0" stroke-width="1.400"/><path d="M4.300 0.100 L7 2.300 L4.300 4.500 Z" fill="#1e6bc0"/></svg>
<div class="t" style="left:402.6px;top:293px;font-size:10px;color:#222;transform:scaleX(0.9316);">EmployeeModel.edmx.diagram</div>
<svg class="a" style="left:371.0px;top:308.7px" width="5.5" height="5.5" viewBox="0 0 5.5 5.5"><path d="M5.500 0 V5.500 H0 Z" fill="#262626"/></svg>
<svg class="a" style="left:386.5px;top:305.7px" width="11" height="11" viewBox="0 0 11 11"><path d="M2.500 1.300 H7 L9.600 3.900 V9.800 H2.500 Z" fill="#fdfdfd" stroke="#3f3f3f" stroke-width="1"/><path d="M7 1.300 V3.900 H9.600" fill="none" stroke="#3f3f3f" stroke-width="0.800"/><path d="M1.200 5 V2.300 H5" fill="none" stroke="#f6f6f7" stroke-width="2.600"/><path d="M1.200 4.800 V2.300 H5" fill="none" stroke="#1e6bc0" stroke-width="1.400"/><path d="M4.300 0.100 L7 2.300 L4.300 4.500 Z" fill="#1e6bc0"/></svg>
<div class="t" style="left:402.6px;top:307px;font-size:10px;color:#222;transform:scaleX(0.9421);">EmployeeModel.tt</div>
<svg class="a" style="left:384.9px;top:321.3px" width="5.2" height="7.2" viewBox="0 0 5.2 7.2"><path d="M0.650 0.900 L4.300 3.600 L0.650 6.300 Z" fill="#f6f6f7" stroke="#333" stroke-width="1.150"/></svg>
<svg class="a" style="left:400.5px;top:319.7px" width="11" height="11" viewBox="0 0 11 11"><path d="M2.500 1.300 H7 L9.600 3.900 V9.800 H2.500 Z" fill="#fdfdfd" stroke="#3f3f3f" stroke-width="1"/><path d="M7 1.300 V3.900 H9.600" fill="none" stroke="#3f3f3f" stroke-width="0.800"/><path d="M1.200 5 V2.300 H5" fill="none" stroke="#f6f6f7" stroke-width="2.600"/><path d="M1.200 4.800 V2.300 H5" fill="none" stroke="#1e6bc0" stroke-width="1.400"/><path d="M4.300 0.100 L7 2.300 L4.300 4.500 Z" fill="#1e6bc0"/></svg>
<div class="t" style="left:416.6px;top:321px;font-size:10px;color:#222;transform:scaleX(0.9267);">Emp_Information.cs</div>
<svg class="a" style="left:384.9px;top:335.3px" width="5.2" height="7.2" viewBox="0 0 5.2 7.2"><path d="M0.650 0.900 L4.300 3.600 L0.650 6.300 Z" fill="#f6f6f7" stroke="#333" stroke-width="1.150"/></svg>
<svg class="a" style="left:400.5px;top:333.7px" width="11" height="11" viewBox="0 0 11 11"><path d="M2.500 1.300 H7 L9.600 3.900 V9.800 H2.500 Z" fill="#fdfdfd" stroke="#3f3f3f" stroke-width="1"/><path d="M7 1.300 V3.900 H9.600" fill="none" stroke="#3f3f3f" stroke-width="0.800"/><path d="M1.200 5 V2.300 H5" fill="none" stroke="#f6f6f7" stroke-width="2.600"/><path d="M1.200 4.800 V2.300 H5" fill="none" stroke="#1e6bc0" stroke-width="1.400"/><path d="M4.300 0.100 L7 2.300 L4.300 4.500 Z" fill="#1e6bc0"/></svg>
<div class="t" style="left:416.6px;top:335px;font-size:10px;color:#222;transform:scaleX(0.9162);">EmployeeModel.cs</div>
<svg class="a" style="left:371.6px;top:347.7px" width="12" height="11.5" viewBox="0 0 12 11.5"><path d="M5.200 1.600 H8.800 L11.200 4 V10.100 H5.200 Z" fill="#fdfdfd" stroke="#3a3a3a" stroke-width="1"/><path d="M8.800 1.600 V4 H11.200" fill="none" stroke="#3a3a3a" stroke-width="0.700"/><rect x="6.600" y="5.200" width="3.200" height="3.400" fill="#8a8a8a"/><path d="M6.600 4.200 H8" stroke="#8a8a8a" stroke-width="0.800"/></svg>
<div class="t" style="left:388.6px;top:349px;font-size:10px;color:#222;transform:scaleX(0.9525);">favicon.ico</div>
<svg class="a" style="left:356.9px;top:363.3px" width="5.2" height="7.2" viewBox="0 0 5.2 7.2"><path d="M0.650 0.900 L4.300 3.600 L0.650 6.300 Z" fill="#f6f6f7" stroke="#333" stroke-width="1.150"/></svg>
<svg class="a" style="left:371.6px;top:361.7px" width="12" height="11.5" viewBox="0 0 12 11.5"><path d="M5.200 1.600 H8.800 L11.200 4 V10.100 H5.200 Z" fill="#fdfdfd" stroke="#3a3a3a" stroke-width="1"/><path d="M8.800 1.600 V4 H11.200" fill="none" stroke="#3a3a3a" stroke-width="0.700"/><circle cx="3.400" cy="8.300" r="1.900" fill="#f6f6f7" stroke="#2b2b2b" stroke-width="1.300"/><circle cx="3.400" cy="8.300" r="3" fill="none" stroke="#2b2b2b" stroke-width="0.700" stroke-dasharray="1 1.350"/></svg>
<div class="t" style="left:388.6px;top:363px;font-size:10px;color:#222;transform:scaleX(0.8692);">Global.asax</div>
<svg class="a" style="left:371.6px;top:375.7px" width="12" height="11.5" viewBox="0 0 12 11.5"><path d="M5.200 1.600 H8.800 L11.200 4 V10.100 H5.200 Z" fill="#fdfdfd" stroke="#3a3a3a" stroke-width="1"/><path d="M8.800 1.600 V4 H11.200" fill="none" stroke="#3a3a3a" stroke-width="0.700"/><path d="M2.900 5 V10.800" stroke="#f6f6f7" stroke-width="3"/><path d="M1.200 1.900 V3.600 A1.700 1.700 0 0 0 4.600 3.600 V1.900" fill="none" stroke="#2b2b2b" stroke-width="1.400"/><path d="M2.900 5 V10.800" stroke="#2b2b2b" stroke-width="1.600"/></svg>
<div class="t" style="left:388.6px;top:377px;font-size:10px;color:#222;transform:scaleX(0.9050);">packages.config</div>
<svg class="a" style="left:371.6px;top:389.7px" width="12" height="11.5" viewBox="0 0 12 11.5"><path d="M5.200 1.600 H8.800 L11.200 4 V10.100 H5.200 Z" fill="#fdfdfd" stroke="#3a3a3a" stroke-width="1"/><path d="M8.800 1.600 V4 H11.200" fill="none" stroke="#3a3a3a" stroke-width="0.700"/><path d="M0 9.300 H7" stroke="#f6f6f7" stroke-width="3.400"/><path d="M2 7.800 L0.500 9.300 L2 10.800 M5 7.800 L6.500 9.300 L5 10.800" stroke="#2a77c9" stroke-width="1" fill="none"/><circle cx="3.500" cy="9.300" r="0.800" fill="#2a77c9"/></svg>
<div class="t" style="left:388.6px;top:391px;font-size:10px;color:#222;transform:scaleX(0.9090);">Project_Readme.html</div>
<svg class="a" style="left:356.9px;top:405.3px" width="5.2" height="7.2" viewBox="0 0 5.2 7.2"><path d="M0.650 0.900 L4.300 3.600 L0.650 6.300 Z" fill="#f6f6f7" stroke="#333" stroke-width="1.150"/></svg>
<div class="t" style="left:374px;top:403px;font-size:8.5px;color:#35882f;font-weight:bold;transform:scaleX(0.8471);">C</div>
<div class="t" style="left:379.3px;top:405px;font-size:7px;color:#35882f;font-weight:bold;transform:scaleX(1.0019);">#</div>
<div class="t" style="left:388.6px;top:405px;font-size:10px;color:#222;transform:scaleX(0.8974);">Startup.cs</div>
<svg class="a" style="left:356.9px;top:419.3px" width="5.2" height="7.2" viewBox="0 0 5.2 7.2"><path d="M0.650 0.900 L4.300 3.600 L0.650 6.300 Z" fill="#f6f6f7" stroke="#333" stroke-width="1.150"/></svg>
<svg class="a" style="left:371.6px;top:417.7px" width="12" height="11.5" viewBox="0 0 12 11.5"><path d="M5.200 1.600 H8.800 L11.200 4 V10.100 H5.200 Z" fill="#fdfdfd" stroke="#3a3a3a" stroke-width="1"/><path d="M8.800 1.600 V4 H11.200" fill="none" stroke="#3a3a3a" stroke-width="0.700"/><path d="M2.900 5 V10.800" stroke="#f6f6f7" stroke-width="3"/><path d="M1.200 1.900 V3.600 A1.700 1.700 0 0 0 4.600 3.600 V1.900" fill="none" stroke="#2b2b2b" stroke-width="1.400"/><path d="M2.900 5 V10.800" stroke="#2b2b2b" stroke-width="1.600"/></svg>
<div class="t" style="left:388.6px;top:419px;font-size:10px;color:#222;transform:scaleX(0.9510);">Web.config</div>
<div class="a" style="left:17px;top:59.2px;width:191.5px;height:26.8px;background:transparent;border:2px solid #e3141f;box-sizing:border-box;"></div>
<div class="a" style="left:55.3px;top:112px;width:161px;height:189.7px;background:transparent;border:2px solid #e3141f;box-sizing:border-box;"></div>
<div class="a" style="left:349px;top:232px;width:195.5px;height:120.5px;background:transparent;border:2px solid #e3141f;box-sizing:border-box;"></div>
<div class="vt" style="left:617.62px;top:63.5px;font-size:9.5px;color:#2d2d2d;transform:rotate(90deg) scaleX(0.9354);">Properties</div>
<div class="a" style="left:620.5px;top:63px;width:3.5px;height:42px;background:#cfd0dc;"></div>
</div>
</body>
</html>
